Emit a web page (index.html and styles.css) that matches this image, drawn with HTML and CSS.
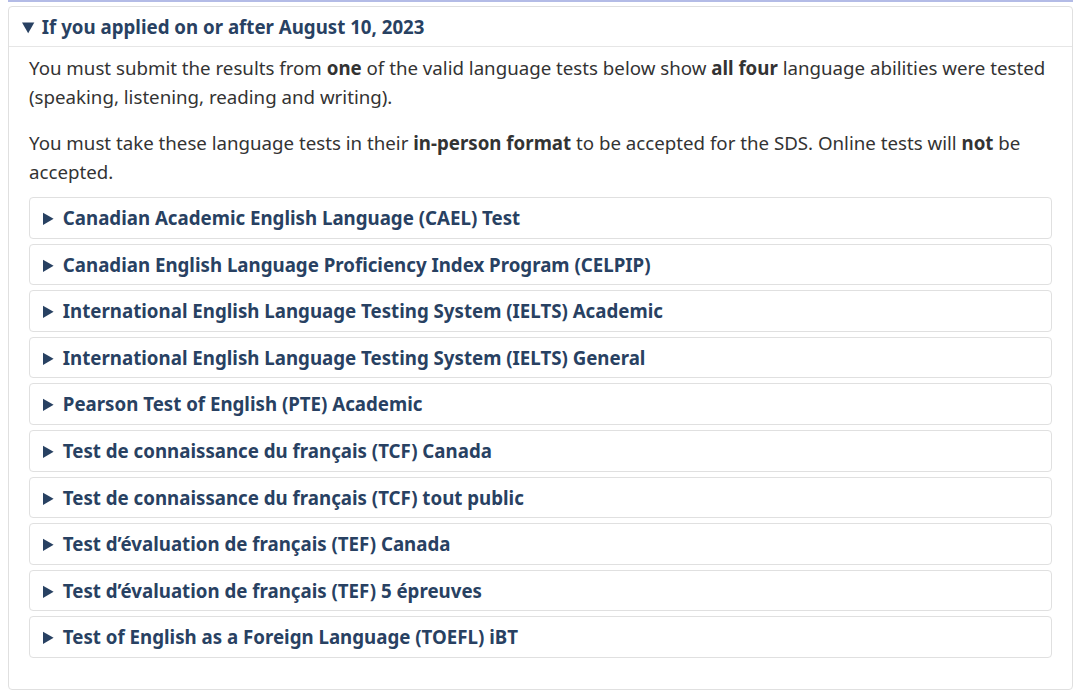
FILE: index.html
```html
<!DOCTYPE html>
<html lang="en">

<head>
    <meta charset="UTF-8">
    <meta name="viewport" content="width=device-width, initial-scale=1.0">
    <title>Language tests for the SDS</title>
    <link rel="stylesheet" href="styles.css">
</head>

<body>
    <div class="page">
        <div class="top-rule"></div>

        <details class="outer" open>
            <summary>If you applied on or after August 10, 2023</summary>
            <div class="outer-body">
                <p>You must submit the results from <strong>one</strong> of the valid language tests below show <strong>all four</strong> language abilities were tested (speaking, listening, reading and writing).</p>
                <p>You must take these language tests in their <strong>in-person format</strong> to be accepted for the SDS. Online tests will <strong>not</strong> be accepted.</p>

                <div class="test-list">
                    <details class="test">
                        <summary>Canadian Academic English Language (CAEL) Test</summary>
                    </details>
                    <details class="test">
                        <summary>Canadian English Language Proficiency Index Program (CELPIP)</summary>
                    </details>
                    <details class="test">
                        <summary>International English Language Testing System (IELTS) Academic</summary>
                    </details>
                    <details class="test">
                        <summary>International English Language Testing System (IELTS) General</summary>
                    </details>
                    <details class="test">
                        <summary>Pearson Test of English (PTE) Academic</summary>
                    </details>
                    <details class="test">
                        <summary>Test de connaissance du français (TCF) Canada</summary>
                    </details>
                    <details class="test">
                        <summary>Test de connaissance du français (TCF) tout public</summary>
                    </details>
                    <details class="test">
                        <summary>Test d’évaluation de français (TEF) Canada</summary>
                    </details>
                    <details class="test">
                        <summary>Test d’évaluation de français (TEF) 5 épreuves</summary>
                    </details>
                    <details class="test">
                        <summary>Test of English as a Foreign Language (TOEFL) iBT</summary>
                    </details>
                </div>
            </div>
        </details>
    </div>
</body>

</html>
```

FILE: styles.css
```css
body {
    font-family: "Noto Sans", sans-serif;
    margin: 0;
    padding: 0;
    background-color: #fff;
    color: #333;
    font-size: 18.7px;
}

.page {
    padding: 0 7px 0 8px;
}

.top-rule {
    height: 2px;
    background-color: #b3bbe6;
    margin-bottom: 4px;
}

details {
    border: 1px solid #e0e0e0;
    border-radius: 4px;
}

summary {
    color: #284162;
    font-weight: bold;
    cursor: pointer;
}

.outer > summary {
    padding: 6px 13px;
    line-height: 27px;
    border-bottom: 1px solid #e6e6e6;
}

.outer-body {
    padding: 6px 20px 26px 20px;
}

.outer-body p {
    margin: 0 0 17px;
    line-height: 29px;
}

.outer-body p:last-of-type {
    margin-bottom: 0;
}

.test-list {
    margin-top: 11px;
}

.test {
    margin-bottom: 5px;
}

.test summary {
    padding: 6px 13px;
    line-height: 27.6px;
}
```
